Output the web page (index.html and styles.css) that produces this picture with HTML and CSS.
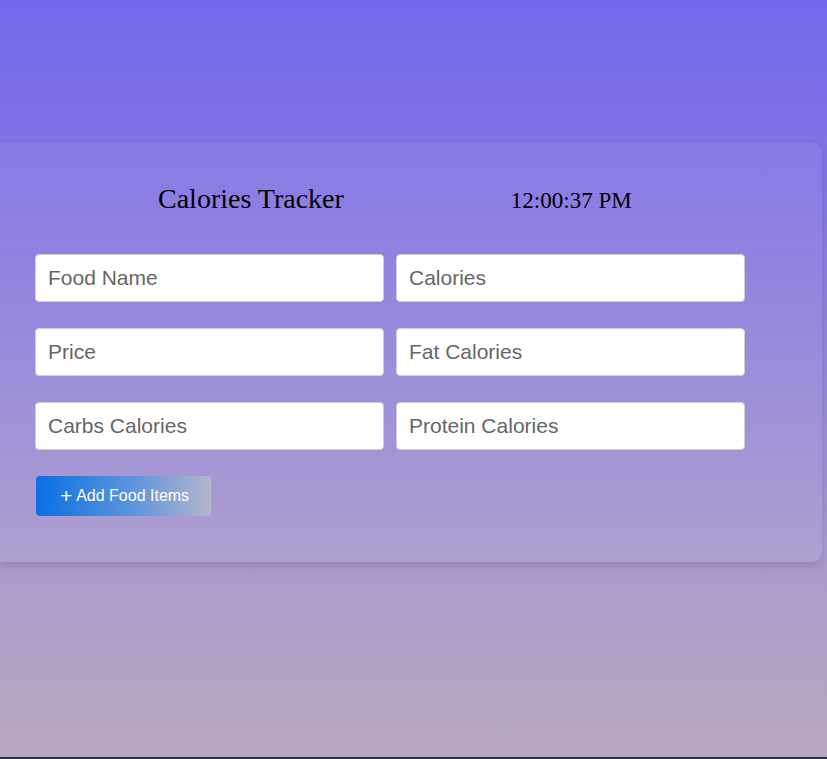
FILE: index.html
```html
<!DOCTYPE html>
<html>
<head>
<meta charset="utf-8">
<link rel="stylesheet" href="styles.css">
</head>
<body>
<div class="page">
  <div class="card">
    <div class="header">
      <h1 class="title">Calories Tracker</h1>
      <div class="clock">12:00:37 PM</div>
    </div>
    <div class="fields">
      <input class="field" type="text" placeholder="Food Name">
      <input class="field" type="text" placeholder="Calories">
      <input class="field" type="text" placeholder="Price">
      <input class="field" type="text" placeholder="Fat Calories">
      <input class="field" type="text" placeholder="Carbs Calories">
      <input class="field" type="text" placeholder="Protein Calories">
    </div>
    <button class="add-btn" type="button"><span class="plus">+</span> Add Food Items</button>
  </div>
</div>
<div class="dock-edge"></div>
</body>
</html>
```
FILE: styles.css
```css
html, body {
  margin: 0;
  padding: 0;
}
body {
  width: 827px;
  height: 759px;
  overflow: hidden;
  font-family: "Liberation Serif", serif;
}
.page {
  height: 757px;
  background: linear-gradient(to bottom, #7467ec 0%, #8f81dc 40%, #ab9ccc 75%, #b8a8bf 100%);
  padding-top: 143px;
  box-sizing: border-box;
}
.card {
  width: 822px;
  box-sizing: border-box;
  padding: 41px 0 46px 35px;
  background: rgba(255, 255, 255, 0.05);
  border-radius: 0 10px 10px 0;
  box-shadow: 0 4px 10px rgba(60, 40, 110, 0.22);
}
.header {
  display: flex;
  align-items: baseline;
  padding-left: 123px;
  height: 30px;
  margin-bottom: 40px;
}
.title {
  margin: 0;
  font-weight: normal;
  font-size: 28px;
  line-height: 30px;
  color: #000;
}
.clock {
  margin-left: 167px;
  font-size: 23px;
  line-height: 29px;
  color: #000;
}
.fields {
  display: grid;
  grid-template-columns: 349px 349px;
  column-gap: 12px;
  row-gap: 26px;
}
.field {
  box-sizing: border-box;
  height: 48px;
  margin: 0;
  padding: 0 12px;
  border: 1px solid #d0cdd8;
  border-radius: 4px;
  background: #fff;
  font-family: "Liberation Sans", Arial, sans-serif;
  font-size: 21px;
  color: #333;
  outline: none;
}
.field::placeholder {
  color: #666;
}
.add-btn {
  display: flex;
  align-items: center;
  justify-content: center;
  gap: 4px;
  margin-top: 26px;
  margin-left: 1px;
  width: 175px;
  height: 40px;
  border: none;
  border-radius: 4px;
  background: linear-gradient(to right, #0a70e2 0%, #5d95dc 55%, #b6b5cd 100%);
  color: #fff;
  font-family: "Liberation Sans", Arial, sans-serif;
  font-size: 16px;
  padding: 0 0 0 2px;
}
.plus {
  font-size: 21px;
  line-height: 1;
  margin-top: -2px;
}
.dock-edge {
  height: 2px;
  background: #203a3c;
}
```
